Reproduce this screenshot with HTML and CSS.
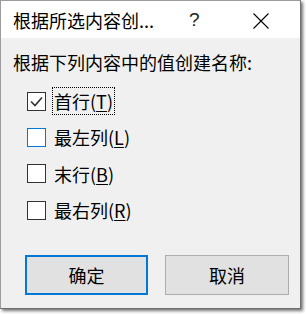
FILE: index.html
```html
<!DOCTYPE html>
<html>
<head>
<meta charset="utf-8">
<link rel="stylesheet" href="styles.css">
</head>
<body>
<div class="window">
  <div class="titlebar">
    <span class="title">根据所选内容创...</span>
    <span class="help">?</span>
    <span class="close"><svg width="16" height="16" viewBox="0 0 16 16"><path d="M0.5 0.5 L15.5 15.5 M15.5 0.5 L0.5 15.5" stroke="#000" stroke-width="1.1" fill="none"/></svg></span>
  </div>
  <div class="content">
    <div class="prompt">根据下列内容中的值创建名称:</div>
    <div class="options">
      <div class="row">
        <span class="box"><svg width="17" height="17" viewBox="0 0 17 17"><path d="M3 8.5 L7 12.5 L14 4.5" stroke="#333" stroke-width="1.6" fill="none"/></svg></span>
        <span class="label focused">首行(<u>T</u>)</span>
      </div>
      <div class="row">
        <span class="box hover"></span>
        <span class="label">最左列(<u>L</u>)</span>
      </div>
      <div class="row">
        <span class="box"></span>
        <span class="label">末行(<u>B</u>)</span>
      </div>
      <div class="row">
        <span class="box"></span>
        <span class="label">最右列(<u>R</u>)</span>
      </div>
    </div>
    <div class="buttons">
      <div class="btn primary">确定</div>
      <div class="btn">取消</div>
    </div>
  </div>
</div>
</body>
</html>
```

FILE: styles.css
```css
html, body {
  margin: 0;
  padding: 0;
  background: #ffffff;
}
body {
  width: 306px;
  height: 314px;
  overflow: hidden;
  font-family: "Noto Sans CJK SC", "Microsoft YaHei", sans-serif;
  font-size: 18px;
  color: #000;
}
.window {
  width: 301px;
  height: 309px;
  box-sizing: border-box;
  border: 1px solid #9c9c9c;
  border-right-color: #6e6e6e;
  border-bottom-color: #6e6e6e;
  background: #f0f0f0;
  box-shadow: 2px 2px 3px rgba(0,0,0,0.55);
  display: flex;
  flex-direction: column;
}
.titlebar {
  height: 37px;
  background: #ffffff;
  display: flex;
  align-items: center;
  line-height: 24px;
  flex-shrink: 0;
}
.title {
  margin-left: 12px;
  width: 176px;
}
.help {
  width: 30px;
  font-family: "Liberation Sans", sans-serif;
  font-size: 19px;
  color: #222;
}
.close {
  margin-left: 34px;
  display: flex;
  margin-top: 2px;
}
.content {
  flex: 1;
  padding: 12px 0 0 12px;
  display: flex;
  flex-direction: column;
}
.prompt {
  line-height: 24px;
  height: 24px;
}
.options {
  margin-top: 9px;
  margin-left: 14px;
  display: flex;
  flex-direction: column;
}
.row {
  height: 36.33px;
  display: flex;
  align-items: center;
}
.box {
  width: 19px;
  height: 19px;
  box-sizing: border-box;
  border: 1px solid #333;
  background: #fff;
  display: flex;
  align-items: center;
  justify-content: center;
}
.box.hover {
  border-color: #0078d7;
}
.label {
  margin-left: 6px;
  line-height: 24px;
  padding: 1px 1px;
  border: 1px dotted transparent;
}
.label.focused {
  border-color: #000;
}
.label u {
  text-decoration-thickness: 1px;
  text-underline-offset: 2px;
}
.buttons {
  margin-top: 27px;
  margin-left: 12px;
  display: flex;
  gap: 17px;
}
.btn {
  width: 124px;
  height: 40px;
  box-sizing: border-box;
  border: 1px solid #adadad;
  background: #e1e1e1;
  display: flex;
  align-items: center;
  justify-content: center;
  line-height: 24px;
}
.btn.primary {
  width: 123px;
  border: 2px solid #0078d7;
}
```
